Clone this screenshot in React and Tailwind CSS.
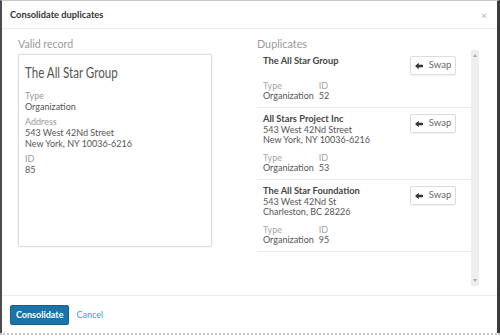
import React from "react";

const duplicates = [
  { name: "The All Star Group", address: [], id: "52" },
  {
    name: "All Stars Project Inc",
    address: ["543 West 42Nd Street", "New York, NY 10036-6216"],
    id: "53",
  },
  {
    name: "The All Star Foundation",
    address: ["543 West 42Nd St", "Charleston, BC 28226"],
    id: "95",
  },
];

const SwapButton = () => (
  <button
    type="button"
    className="flex items-center gap-[6px] h-[19px] w-[46px] justify-center border border-[#dcdcdc] rounded-[2px] bg-white text-[9.5px] text-[#666] shadow-[0_1px_1px_rgba(0,0,0,0.05)]"
  >
    <svg width="8" height="8" viewBox="0 0 9 8">
      <path d="M0 4 L4.2 0.3 L4.2 2.5 L9 2.5 L9 5.5 L4.2 5.5 L4.2 7.7 Z" fill="#333" />
    </svg>
    Swap
  </button>
);

const DuplicateItem = ({ item }) => (
  <div className="flex justify-between pl-[6px] pr-[15px] pt-[5px] pb-[6px] border-b border-[#ececec]">
    <div className="text-[9px] leading-[10px] text-[#555]">
      <p className="font-bold text-[9.3px] leading-[12px] text-[#444]">{item.name}</p>
      {item.address.length === 0 ? (
        <div className="h-[6px]" />
      ) : (
        item.address.map((a) => <p key={a}>{a}</p>)
      )}
      <div className="flex gap-[5px] mt-[8px]">
        <div>
          <p className="text-[#a5a5a5]">Type</p>
          <p>Organization</p>
        </div>
        <div>
          <p className="text-[#a5a5a5]">ID</p>
          <p>{item.id}</p>
        </div>
      </div>
    </div>
    <div className="pt-[1px]">
      <SwapButton />
    </div>
  </div>
);

export default function App() {
  return (
    <div
      className="w-[500px] h-[336px] bg-white flex flex-col"
      style={{ fontFamily: "Lato, 'Open Sans', sans-serif" }}
    >
      <div className="h-[333px] flex flex-col border-l-2 border-l-[#4c4c4c] border-r-[3px] border-r-[#3a3a3a] border-t border-t-[#c8c8c8]">
        <div className="h-[28px] shrink-0 flex items-center justify-between pl-[8px] pr-[10px] border-b border-[#ececec]">
          <h2 className="text-[9.3px] font-bold text-[#333]">Consolidate duplicates</h2>
          <span className="text-[10px] text-[#b0b0b0] leading-none">×</span>
        </div>

        <div className="flex-1 flex pl-[16px] pt-[8px]">
          <div className="w-[194px]">
            <p className="text-[10.6px] leading-[14px] text-[#9a9a9a]">Valid record</p>
            <div className="mt-[3px] h-[193px] border border-[#dedede] rounded-[2px] shadow-[0_0_2px_rgba(0,0,0,0.12)] px-[6px] pt-[8px] text-[9px] leading-[11px] text-[#555]">
              <p className="text-[15px] leading-[18px] text-[#555] origin-left scale-x-[0.77] whitespace-nowrap">
                The All Star Group
              </p>
              <p className="mt-[9px] text-[#9a9a9a]">Type</p>
              <p>Organization</p>
              <p className="mt-[4px] text-[#9a9a9a]">Address</p>
              <p>543 West 42Nd Street</p>
              <p>New York, NY 10036-6216</p>
              <p className="mt-[4px] text-[#9a9a9a]">ID</p>
              <p>85</p>
            </div>
          </div>

          <div className="ml-[45px] w-[222px]">
            <p className="text-[10.8px] leading-[14px] text-[#9a9a9a]">Duplicates</p>
            <div className="flex h-[236px] -mt-[1px]">
              <div className="flex-1">
                {duplicates.map((d) => (
                  <DuplicateItem key={d.id} item={d} />
                ))}
              </div>
              <div className="w-[8px] bg-[#eeeeee] flex flex-col justify-between items-center py-[4px]">
                <svg width="4" height="3" viewBox="0 0 4 3">
                  <path d="M0 3 L2 0 L4 3 Z" fill="#aaa" />
                </svg>
                <svg width="4" height="3" viewBox="0 0 4 3">
                  <path d="M0 0 L2 3 L4 0 Z" fill="#aaa" />
                </svg>
              </div>
            </div>
          </div>
        </div>

        <div className="h-[38px] shrink-0 border-t border-[#ececec] flex items-center gap-[7px] pl-[8px]">
          <button
            type="button"
            className="h-[20px] px-[5px] bg-[#1b73a8] rounded-[2px] text-white text-[9px] font-bold border border-[#155f8c]"
          >
            Consolidate
          </button>
          <button type="button" className="text-[9px] text-[#3a9ad6]">
            Cancel
          </button>
        </div>
      </div>
      <div className="flex-1 border-t-2 border-dotted border-[#c4c4c4]" />
    </div>
  );
}
